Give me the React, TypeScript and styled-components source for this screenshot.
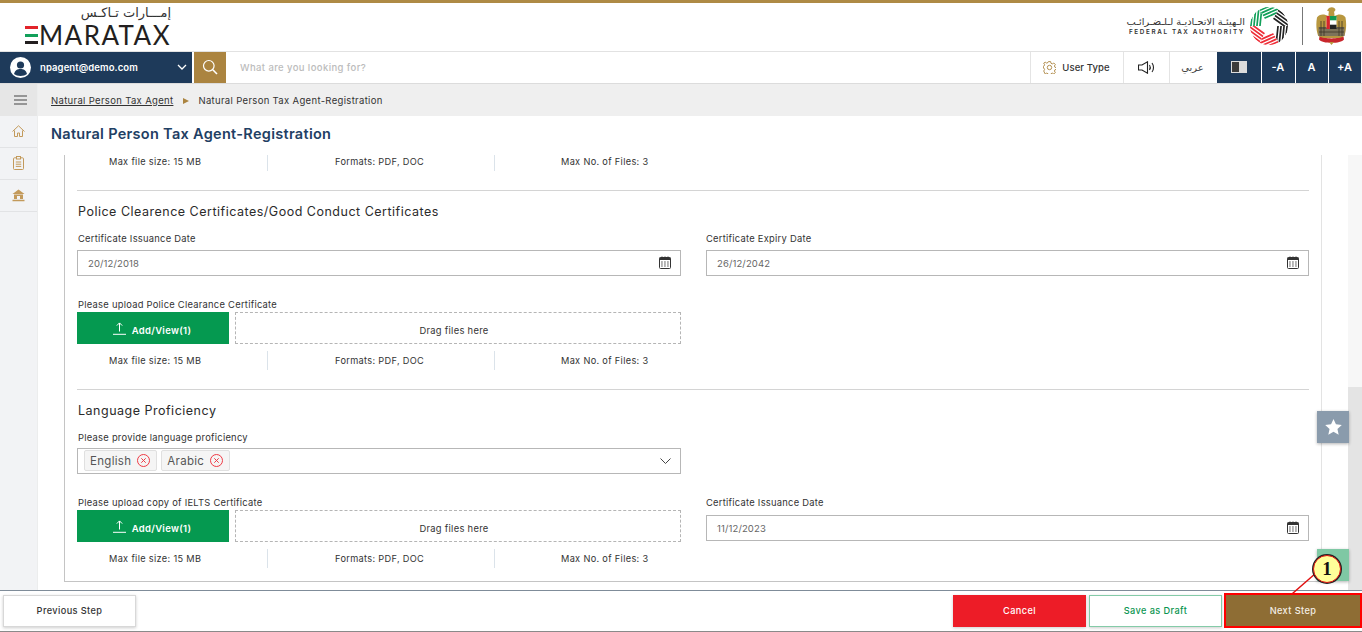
import React from "react";
import styled, { createGlobalStyle } from "styled-components";

const navy = "#1e3a5a";
const gold = "#ab8440";

const GlobalStyle = createGlobalStyle`
  html, body {
    margin: 0;
    padding: 0;
    height: 100%;
    overflow: hidden;
    background: #fff;
  }
  body {
    font-family: "Inter", "Noto Sans", "DejaVu Sans", sans-serif;
    color: #333;
  }
  * { box-sizing: border-box; }
`;

const Page = styled.div`
  position: relative;
  width: 1362px;
  height: 632px;
  display: flex;
  flex-direction: column;
  overflow: hidden;
  border-top: 3.5px solid #ae8a45;
`;

const BrandRow = styled.header`
  height: 47.5px;
  flex: none;
  display: flex;
  align-items: stretch;
  justify-content: space-between;
`;

const EmaraLogo = styled.div`
  margin-left: 25px;
  width: 146px;
  display: flex;
  flex-direction: column;
  align-items: flex-end;
`;

const LogoArabic = styled.div`
  font-family: "DejaVu Sans", sans-serif;
  font-size: 13px;
  line-height: 18px;
  height: 21px;
  padding-top: 1px;
  color: #333;
  direction: rtl;
`;

const LogoWord = styled.div`
  display: flex;
  align-items: center;
  gap: 1px;
  width: 100%;
  height: 22px;
`;

const WordText = styled.span`
  font-family: "Lato", sans-serif;
  font-size: 26px;
  line-height: 22px;
  letter-spacing: 1.45px;
  color: #231f20;
  white-space: nowrap;
`;

const FlagE = styled.span`
  display: flex;
  flex-direction: column;
  justify-content: space-between;
  width: 13px;
  height: 18px;
  flex: none;
`;

const FlagBar = styled.i<{ $c: string }>`
  display: block;
  height: 3px;
  background: ${(p) => p.$c};
`;

const FtaGroup = styled.div`
  display: flex;
  align-items: center;
  margin-right: 15px;
  padding-bottom: 2px;
`;

const FtaText = styled.div`
  display: flex;
  flex-direction: column;
  align-items: flex-end;
  margin-right: 5px;
`;

const FtaArabic = styled.div`
  font-family: "DejaVu Sans", sans-serif;
  font-size: 9.8px;
  line-height: 13px;
  color: #333;
  direction: rtl;
  white-space: nowrap;
`;

const FtaEnglish = styled.div`
  font-size: 6.3px;
  line-height: 9px;
  font-weight: 600;
  letter-spacing: 1.65px;
  color: #333;
  white-space: nowrap;
`;

const FtaRule = styled.div`
  width: 1px;
  height: 38px;
  margin: 0 13px 0 14px;
  background: #777;
`;

const NavBar = styled.nav`
  height: 33px;
  flex: none;
  display: flex;
  align-items: stretch;
  border-top: 1px solid #e2e2e2;
  border-bottom: 1px solid #dcdcdc;
  background: #fff;
`;

const UserBox = styled.div`
  width: 192px;
  flex: none;
  display: flex;
  align-items: center;
  padding-left: 10px;
  background: ${navy};
  color: #fff;
  font-size: 9.5px;
  font-weight: 600;
`;

const UserName = styled.span`
  margin-left: 9px;
  flex: 1;
  letter-spacing: 0.1px;
`;

const ChevronSpot = styled.span`
  display: flex;
  margin-right: 5px;
`;

const SearchButton = styled.div`
  width: 32px;
  flex: none;
  margin-left: 2px;
  display: flex;
  align-items: center;
  justify-content: center;
  background: ${gold};
`;

const SearchText = styled.div`
  flex: 1;
  padding-left: 14px;
  display: flex;
  align-items: center;
  font-size: 9.5px;
  font-weight: 500;
  color: #bcbcbc;
  letter-spacing: 0.4px;
`;

const ToolCell = styled.div<{ $w: number }>`
  width: ${(p) => p.$w}px;
  flex: none;
  display: flex;
  align-items: center;
  justify-content: center;
  gap: 6px;
  border-left: 1px solid #e4e4e4;
  font-size: 9.5px;
  font-weight: 500;
  letter-spacing: 0.1px;
  color: #333;
`;

const ArabicLink = styled.span`
  font-family: "DejaVu Sans", sans-serif;
  font-size: 10px;
  color: #444;
`;

const DarkCell = styled.div<{ $w: number }>`
  width: ${(p) => p.$w}px;
  flex: none;
  display: flex;
  align-items: center;
  justify-content: center;
  margin-left: 1px;
  background: ${navy};
  color: #fff;
  font-size: 11px;
  font-weight: 600;
`;

const EdgeGap = styled.div`
  width: 1.5px;
  flex: none;
`;

const ContrastIcon = styled.span`
  display: flex;
  width: 16px;
  height: 12px;
  padding: 1px;
  background: #dcdcdc;
`;

const ContrastHalf = styled.i<{ $c: string }>`
  display: block;
  flex: 1;
  background: ${(p) => p.$c};
`;

const Body = styled.div`
  flex: 1;
  min-height: 0;
  display: flex;
`;

const SideBar = styled.aside`
  width: 38px;
  flex: none;
  display: flex;
  flex-direction: column;
  background: #f2f3f5;
  border-right: 1px solid #eceded;
`;

const MenuCell = styled.div`
  height: 32px;
  display: flex;
  align-items: center;
  justify-content: center;
  padding-left: 4px;
  background: #e6e6e6;
`;

const SideItem = styled.div`
  height: 32px;
  display: flex;
  align-items: center;
  justify-content: center;
  padding-right: 1px;
  border-bottom: 1px solid #e2e3e5;
`;

const Main = styled.main`
  flex: 1;
  min-width: 0;
  display: flex;
  flex-direction: column;
`;

const Crumbs = styled.div`
  height: 32px;
  flex: none;
  display: flex;
  align-items: center;
  padding: 2px 0 0 13px;
  background: #efefef;
  font-size: 9.5px;
  font-weight: 400;
  letter-spacing: 0.33px;
  color: #333;
`;

const CrumbLink = styled.a`
  color: #333;
  text-decoration: underline;
`;

const CrumbArrow = styled.span`
  width: 0;
  height: 0;
  margin: 0 9px 0 10px;
  border-left: 6px solid ${gold};
  border-top: 3.5px solid transparent;
  border-bottom: 3.5px solid transparent;
`;

const PageTitle = styled.h1`
  height: 39px;
  flex: none;
  margin: 0;
  padding: 0 0 3px 13px;
  display: flex;
  align-items: center;
  background: #fff;
  font-size: 14.5px;
  font-weight: 600;
  color: #1f4064;
  letter-spacing: 0.3px;
`;

const ScrollArea = styled.div`
  flex: 1;
  min-height: 0;
  padding: 0 40.5px 8.5px 26px;
  overflow: hidden;
  display: flex;
`;

/* the form is scrolled a little, so its first row is cut by the title */
const Panel = styled.section`
  flex: 1;
  margin-top: -3px;
  padding: 0 12px;
  border: 1px solid #c4c4c4;
  border-top: 0;
  border-right-color: #e3e3e3;
`;

const Hints = styled.div<{ $mb: number }>`
  display: grid;
  grid-template-columns: 190px 227px 1fr;
  width: 604px;
  height: 19px;
  margin-bottom: ${(p) => p.$mb}px;
`;

const Hint = styled.div<{ $pad: number; $line?: boolean }>`
  display: flex;
  align-items: center;
  padding-left: ${(p) => p.$pad}px;
  border-left: ${(p) => (p.$line ? "1px solid #dbe3ea" : "0")};
  font-size: 9.2px;
  font-weight: 400;
  color: #333;
  letter-spacing: 0.33px;
`;

const Rule = styled.hr`
  margin: 0;
  border: 0;
  border-top: 1px solid #d4d4d4;
`;

const SectionTitle = styled.h2`
  margin: 0;
  height: 41px;
  padding-left: 1px;
  display: flex;
  align-items: center;
  font-size: 12.5px;
  font-weight: 400;
  color: #2b2b2b;
  letter-spacing: 0.5px;
`;

const Columns = styled.div`
  display: grid;
  grid-template-columns: 604px 603px;
  column-gap: 25px;
`;

const Label = styled.div<{ $flush?: boolean }>`
  height: 12px;
  padding: 1px 0 0 ${(p) => (p.$flush ? 0 : 1)}px;
  display: flex;
  align-items: center;
  font-size: 9.4px;
  font-weight: 400;
  color: #333;
  letter-spacing: 0.25px;
`;

const InputBox = styled.div<{ $mt?: number }>`
  height: 26px;
  margin-top: ${(p) => p.$mt ?? 6}px;
  display: flex;
  align-items: center;
  justify-content: space-between;
  padding: 0 9px 0 10px;
  border: 1px solid #b7b7b7;
  font-size: 9.5px;
  color: #666;
  letter-spacing: 0.12px;
`;

const DateText = styled.span`
  padding-top: 1px;
`;

const FieldSpacer = styled.div<{ $h: number }>`
  height: ${(p) => p.$h}px;
`;

const UploadRow = styled.div`
  display: flex;
  gap: 6px;
  height: 32px;
  margin-top: 2px;
`;

const AddButton = styled.div`
  width: 152px;
  flex: none;
  display: flex;
  align-items: center;
  justify-content: center;
  gap: 6px;
  padding: 6px 2px 0 0;
  background: #059950;
  color: #fff;
  font-size: 9.5px;
  font-weight: 600;
  letter-spacing: 0.3px;
`;

const UploadGlyph = styled.svg`
  display: block;
  flex: none;
  margin-top: -5px;
`;

const DropZone = styled.div`
  flex: 1;
  display: flex;
  align-items: center;
  justify-content: center;
  padding: 6px 8px 0 0;
  border: 1px dashed #b5b5b5;
  font-size: 9.4px;
  font-weight: 400;
  letter-spacing: 0.28px;
  color: #333;
`;

const Chips = styled.div`
  display: flex;
  gap: 4px;
`;

const Chip = styled.span`
  height: 21px;
  display: flex;
  align-items: center;
  gap: 6px;
  padding: 0 6px 0 5px;
  background: #f5f5f5;
  border: 1px solid #e0e0e0;
  border-radius: 2px;
  font-size: 11.5px;
  color: #555;
  letter-spacing: 0.3px;
`;

const SelectBox = styled(InputBox)`
  padding-left: 6px;
`;

const Footer = styled.footer`
  height: 42px;
  flex: none;
  display: flex;
  align-items: flex-start;
  padding: 3.5px 0 0 3px;
  border-top: 1px solid #7f8c99;
  border-bottom: 1px solid #8a8a8a;
  background: #fff;
`;

const FootButton = styled.div<{ $kind: "plain" | "red" | "draft" }>`
  width: 133px;
  height: 32px;
  display: flex;
  align-items: center;
  justify-content: center;
  font-size: 9.2px;
  font-weight: 500;
  letter-spacing: 0.4px;
  box-shadow: 0 1px 3px rgba(0, 0, 0, 0.2);
  background: ${(p) => (p.$kind === "red" ? "#ed1c27" : "#fff")};
  color: ${(p) => (p.$kind === "red" ? "#fff" : p.$kind === "draft" ? "#0b9551" : "#333")};
  border: 1px solid
    ${(p) => (p.$kind === "red" ? "#ed1c27" : p.$kind === "draft" ? "#84cba8" : "#d8d8d8")};
`;

const FootRight = styled.div`
  margin-left: auto;
  display: flex;
  gap: 3px;
  align-items: flex-start;
`;

const NextButton = styled.div`
  width: 138px;
  height: 35px;
  margin-top: -1.5px;
  margin-left: -1px;
  display: flex;
  align-items: center;
  justify-content: center;
  background: #8e6d34;
  border: 2px solid #f00;
  color: #f4efe6;
  font-size: 9.2px;
  font-weight: 500;
  letter-spacing: 0.4px;
`;

const ScrollTrack = styled.div`
  position: absolute;
  top: 151.5px;
  right: 0;
  bottom: 42px;
  width: 14px;
  background: #f7f7f7;
`;

const ScrollThumb = styled.div`
  position: absolute;
  left: 0;
  right: 0;
  bottom: 0;
  height: 203px;
  background: #e4e4e4;
`;

const FloatButton = styled.div<{ $top: number; $bg: string }>`
  position: absolute;
  top: ${(p) => p.$top}px;
  left: 1317px;
  width: 32px;
  height: 32px;
  display: flex;
  align-items: center;
  justify-content: center;
  background: ${(p) => p.$bg};
  box-shadow: 0 1px 3px rgba(0, 0, 0, 0.3);
`;

const Callout = styled.div`
  position: absolute;
  left: 1313px;
  top: 552px;
  width: 28px;
  height: 28px;
  border-radius: 50%;
  display: flex;
  align-items: center;
  justify-content: center;
  background: #ffff99;
  border: 1.5px solid #e01010;
  box-shadow: 0 0 0 1px #222;
  font-family: "Liberation Serif", serif;
  font-size: 19px;
  font-weight: 700;
  color: #111;
`;

const CalloutLine = styled.svg`
  position: absolute;
  left: 1288px;
  top: 568.5px;
`;

const Glyph = styled.svg`
  display: block;
  flex: none;
`;

function Calendar() {
  return (
    <Glyph width="12" height="13" viewBox="0 0 12 13">
      <rect x="0.5" y="1.5" width="11" height="11" rx="1" fill="#fff" stroke="#333" />
      <rect x="0.5" y="1.5" width="11" height="2.5" fill="#333" />
      <path d="M3 0.5v2M6 0.5v2M9 0.5v2" stroke="#333" />
      <path
        d="M2.2 6h1.500M5.200 6h1.500M8.200 6h1.500M2.200 8h1.500M5.200 8h1.500M8.200 8h1.500M2.200 10h1.500M5.200 10h1.500M8.200 10h1.500"
        stroke="#444"
      />
    </Glyph>
  );
}

function UploadIcon() {
  return (
    <UploadGlyph width="13" height="13" viewBox="0 0 13 13" fill="none" stroke="#fff" strokeWidth="1">
      <path d="M6.500 9.500V1M3.800 3.600l2.700-2.700 2.700 2.700M0 12.300h13" />
    </UploadGlyph>
  );
}

function RemoveIcon() {
  return (
    <Glyph width="13" height="13" viewBox="0 0 13 13" fill="none" stroke="#ee3a45" strokeWidth="1">
      <circle cx="6.500" cy="6.500" r="6" />
      <path d="M4.300 4.300l4.400 4.400M8.700 4.300l-4.400 4.400" />
    </Glyph>
  );
}

// six striped wedges turning round a white centre
function FtaMark() {
  const colors = ["#12a05a", "#12a05a", "#222", "#222", "#ee2e38", "#ee2e38"];
  return (
    <Glyph width="38" height="38" viewBox="-19 -19 38 38" fill="none">
      <defs>
        <clipPath id="fta-wedge">
          <path d="M0 0L-11 -19L11 -19z" />
        </clipPath>
      </defs>
      {colors.map((c, i) => (
        <g key={i} transform={`rotate(${i * 60 - 60})`}>
          <g clipPath="url(#fta-wedge)">
            <circle r="19" fill="#fff" />
            <g transform="rotate(-24)" stroke={c} strokeWidth="1.700">
              <path d="M-20 -9H20M-20 -12H20M-20 -15H20M-20 -18H20" />
            </g>
          </g>
        </g>
      ))}
      <circle r="7.500" fill="#fff" />
      <circle r="21" stroke="#fff" strokeWidth="4" />
    </Glyph>
  );
}

function Emblem() {
  return (
    <Glyph width="31" height="38" viewBox="0 0 31 38">
      <path
        d="M13 1c3-1.500 6-.5 6.500 2L18 5c.5 1.500.5 3 .5 4 4-2.500 9-2 11 1.500 1 5.500 1 12-1 18l-3 2.500H5l-3-2.500C0 22.500 0 16 1 10.500 3 7 8 6.500 12.500 9c0-2 0-3 .5-4.500L11 3.500z"
        fill="#b8973f"
      />
      <path d="M2.500 20h26v9H2.500z" fill="#7d735a" />
      <path
        d="M5 14v15M8 14v15M23 14v15M26 14v15M3 21h25M3 25h25"
        stroke="#3c3626"
        strokeWidth="0.8"
        fill="none"
      />
      <rect x="10.500" y="9" width="10" height="13" rx="2" fill="#fff" />
      <rect x="10.500" y="9" width="3.400" height="13" fill="#d8232a" />
      <rect x="13.900" y="9" width="6.600" height="4.300" fill="#129a52" />
      <rect x="13.900" y="17.700" width="6.600" height="4.300" fill="#222" />
      <path d="M3.500 29.500c4 2.500 20 2.500 24 0l.5 3c-3 4.500-22 4.500-25 0z" fill="#c8262c" />
      <path d="M13 35h5l-2.500 3z" fill="#b8973f" />
    </Glyph>
  );
}

function FileHints({ mb }: { mb: number }) {
  return (
    <Hints $mb={mb}>
      <Hint $pad={32}>Max file size: 15 MB</Hint>
      <Hint $pad={67} $line>
        Formats: PDF, DOC
      </Hint>
      <Hint $pad={66} $line>
        Max No. of Files: 3
      </Hint>
    </Hints>
  );
}

function Upload() {
  return (
    <UploadRow>
      <AddButton>
        <UploadIcon />
        Add/View(1)
      </AddButton>
      <DropZone>Drag files here</DropZone>
    </UploadRow>
  );
}

export default function App() {
  return (
    <Page>
      <GlobalStyle />
      <BrandRow>
        <EmaraLogo>
          <LogoArabic>إمـــارات تـاكـس</LogoArabic>
          <LogoWord>
            <FlagE>
              <FlagBar $c="#e2232a" />
              <FlagBar $c="#12a05a" />
              <FlagBar $c="#231f20" />
            </FlagE>
            <WordText>MARATAX</WordText>
          </LogoWord>
        </EmaraLogo>
        <FtaGroup>
          <FtaText>
            <FtaArabic>الـهيئـة الاتحـاديـة لـلـضـرائـب</FtaArabic>
            <FtaEnglish>FEDERAL TAX AUTHORITY</FtaEnglish>
          </FtaText>
          <FtaMark />
          <FtaRule />
          <Emblem />
        </FtaGroup>
      </BrandRow>

      <NavBar>
        <UserBox>
          <Glyph width="21" height="21" viewBox="0 0 21 21">
            <circle cx="10.500" cy="10.500" r="10.500" fill="#fff" />
            <circle cx="10.500" cy="8" r="3.600" fill={navy} />
            <path d="M4 17c1-4 3.500-5 6.500-5s5.500 1 6.500 5c-3 2.500-10 2.500-13 0z" fill={navy} />
          </Glyph>
          <UserName>npagent@demo.com</UserName>
          <ChevronSpot>
            <Glyph width="10" height="6" viewBox="0 0 10 6" fill="none" stroke="#fff" strokeWidth="1.300">
              <path d="M1 1l4 4 4-4" />
            </Glyph>
          </ChevronSpot>
        </UserBox>
        <SearchButton>
          <Glyph width="16" height="16" viewBox="0 0 16 16" fill="none" stroke="#fff" strokeWidth="1.200">
            <circle cx="6.800" cy="6.800" r="5.300" />
            <path d="M10.800 10.800l4.200 4.200" strokeWidth="1.600" />
          </Glyph>
        </SearchButton>
        <SearchText>What are you looking for?</SearchText>
        <ToolCell $w={93}>
          <Glyph width="13" height="13" viewBox="0 0 13 13" fill="none" stroke={gold} strokeWidth="0.900">
            <path d="M5.400 0.600h2.200l.4 1.700 1.300.6 1.500-.9 1.500 1.500-.9 1.500.6 1.300 1.700.4v1.600l-1.700.4-.6 1.300.9 1.500-1.500 1.500-1.500-.9-1.300.6-.4 1.200H5.400l-.4-1.200-1.300-.6-1.500.9L.700 10l.9-1.500-.6-1.300L.4 7V5.400l.6-.4.600-1.300-.9-1.500L2.200 1.200l1.500.9 1.300-.6z" />
            <circle cx="6.500" cy="6.500" r="2.200" />
          </Glyph>
          User Type
        </ToolCell>
        <ToolCell $w={46}>
          <Glyph width="17" height="13" viewBox="0 0 17 13" fill="none" stroke="#222" strokeWidth="1.100">
            <path d="M0.500 4h3.500L9.500 0.800v11.400L4 9H0.500z" />
            <path d="M11.500 4c1 1.500 1 3.500 0 5M14 2c2 2.500 2 6.500 0 9" />
          </Glyph>
        </ToolCell>
        <ToolCell $w={47}>
          <ArabicLink>عربي</ArabicLink>
        </ToolCell>
        <DarkCell $w={44}>
          <ContrastIcon>
            <ContrastHalf $c="#3b3b3b" />
            <ContrastHalf $c="#dcdcdc" />
          </ContrastIcon>
        </DarkCell>
        <DarkCell $w={33}>-A</DarkCell>
        <DarkCell $w={32}>A</DarkCell>
        <DarkCell $w={32}>+A</DarkCell>
        <EdgeGap />
      </NavBar>

      <Body>
        <SideBar>
          <MenuCell>
            <Glyph width="13" height="10" viewBox="0 0 13 10" fill="none" stroke="#444" strokeWidth="1.200">
              <path d="M0 1h13M0 5h13M0 9h13" />
            </Glyph>
          </MenuCell>
          <SideItem>
            <Glyph width="13" height="12" viewBox="0 0 13 12" fill="none" stroke="#c39a5b" strokeWidth="1">
              <path d="M0.500 6.500L6.500 0.800l6 5.700M2.500 5.500v6h3V8h2v3.500h3v-6" />
            </Glyph>
          </SideItem>
          <SideItem>
            <Glyph width="11" height="14" viewBox="0 0 11 14" fill="none" stroke="#c39a5b" strokeWidth="1">
              <rect x="0.500" y="1.800" width="10" height="11.700" rx="1" />
              <rect x="3.500" y="0.500" width="4" height="2.500" fill="#f2f3f5" />
              <path d="M2.800 6h5.400M2.800 8.200h5.400M2.800 10.400h5.400" />
            </Glyph>
          </SideItem>
          <SideItem>
            <Glyph width="13" height="13" viewBox="0 0 13 13">
              <path d="M6.500 0.500L0.500 5h12z" fill="#c39a5b" />
              <path d="M2 5.500h9V10H8V7H5v3H2z" fill="#c39a5b" />
              <path d="M0.500 11.500h12" stroke="#c39a5b" strokeWidth="1.500" />
            </Glyph>
          </SideItem>
        </SideBar>

        <Main>
          <Crumbs>
            <CrumbLink>Natural Person Tax Agent</CrumbLink>
            <CrumbArrow />
            Natural Person Tax Agent-Registration
          </Crumbs>
          <PageTitle>Natural Person Tax Agent-Registration</PageTitle>
          <ScrollArea>
            <Panel>
              <FileHints mb={19} />
              <Rule />
              <SectionTitle>Police Clearence Certificates/Good Conduct Certificates</SectionTitle>
              <Columns>
                <div>
                  <Label>Certificate Issuance Date</Label>
                  <InputBox>
                    <DateText>20/12/2018</DateText>
                    <Calendar />
                  </InputBox>
                </div>
                <div>
                  <Label $flush>Certificate Expiry Date</Label>
                  <InputBox>
                    <DateText>26/12/2042</DateText>
                    <Calendar />
                  </InputBox>
                </div>
              </Columns>
              <FieldSpacer $h={22} />
              <Label>Please upload Police Clearance Certificate</Label>
              <Columns>
                <Upload />
              </Columns>
              <FieldSpacer $h={7} />
              <FileHints mb={19} />
              <Rule />
              <SectionTitle>Language Proficiency</SectionTitle>
              <Columns>
                <div>
                  <Label>Please provide language proficiency</Label>
                  <SelectBox $mt={5}>
                    <Chips>
                      <Chip>
                        English
                        <RemoveIcon />
                      </Chip>
                      <Chip>
                        Arabic
                        <RemoveIcon />
                      </Chip>
                    </Chips>
                    <Glyph width="11" height="6" viewBox="0 0 11 6" fill="none" stroke="#444" strokeWidth="1">
                      <path d="M0.500 0.500l5 5 5-5" />
                    </Glyph>
                  </SelectBox>
                </div>
              </Columns>
              <FieldSpacer $h={22} />
              <Columns>
                <div>
                  <Label>Please upload copy of IELTS Certificate</Label>
                  <Upload />
                </div>
                <div>
                  <Label $flush>Certificate Issuance Date</Label>
                  <InputBox $mt={7}>
                    <DateText>11/12/2023</DateText>
                    <Calendar />
                  </InputBox>
                </div>
              </Columns>
              <FieldSpacer $h={7} />
              <FileHints mb={0} />
            </Panel>
          </ScrollArea>
        </Main>
      </Body>

      <Footer>
        <FootButton $kind="plain">Previous Step</FootButton>
        <FootRight>
          <FootButton $kind="red">Cancel</FootButton>
          <FootButton $kind="draft">Save as Draft</FootButton>
          <NextButton>Next Step</NextButton>
        </FootRight>
      </Footer>

      <ScrollTrack>
        <ScrollThumb />
      </ScrollTrack>
      <FloatButton $top={407.5} $bg="#8a9bac">
        <Glyph width="17" height="16" viewBox="0 0 18 17">
          <path d="M9 0l2.600 5.700 6.200.7-4.600 4.200 1.300 6.100L9 13.600l-5.500 3.100 1.300-6.100L.2 6.400l6.200-.7z" fill="#fff" />
        </Glyph>
      </FloatButton>
      <FloatButton $top={545.5} $bg="#7fc8a4" />
      <CalloutLine width="40" height="24" viewBox="0 0 40 24">
        <path d="M28 1L4.500 21.500" stroke="#e01010" strokeWidth="1.500" />
      </CalloutLine>
      <Callout>1</Callout>
    </Page>
  );
}
